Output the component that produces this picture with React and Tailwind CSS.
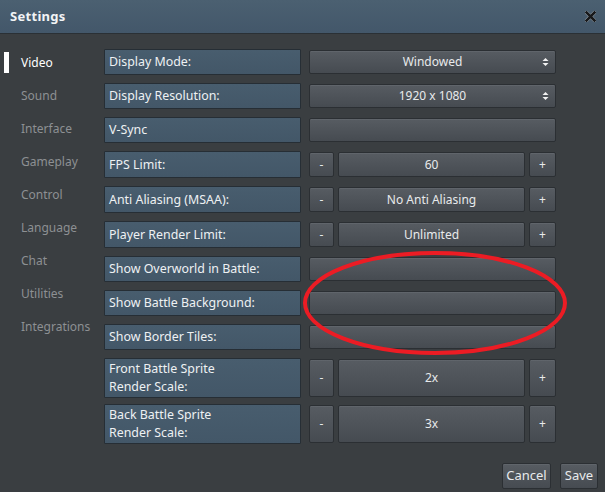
import React from 'react'

const menu = ['Video', 'Sound', 'Interface', 'Gameplay', 'Control', 'Language', 'Chat', 'Utilities', 'Integrations']

const rows = [
  { label: 'Display Mode:', kind: 'select', value: 'Windowed', h: 'h-[26px]' },
  { label: 'Display Resolution:', kind: 'select', value: '1920 x 1080', h: 'h-[26px]' },
  { label: 'V-Sync', kind: 'blank', h: 'h-[26px]' },
  { label: 'FPS Limit:', kind: 'step', value: '60', h: 'h-[27px]' },
  { label: 'Anti Aliasing (MSAA):', kind: 'step', value: 'No Anti Aliasing', h: 'h-[27px]' },
  { label: 'Player Render Limit:', kind: 'step', value: 'Unlimited', h: 'h-[27px]' },
  { label: 'Show Overworld in Battle:', kind: 'blank', h: 'h-[26px]' },
  { label: 'Show Battle Background:', kind: 'blank', h: 'h-[26px]' },
  { label: 'Show Border Tiles:', kind: 'blank', h: 'h-[26px]' },
  { label: ['Front Battle Sprite', 'Render Scale:'], kind: 'step', value: '2x', h: 'h-[40px]' },
  { label: ['Back Battle Sprite', 'Render Scale:'], kind: 'step', value: '3x', h: 'h-[40px]', last: true },
]

const btn = 'flex items-center justify-center rounded-[2px] border border-[#2b2f33] bg-gradient-to-b from-[#575c62] to-[#464b51] text-[#e8eaec] shadow-[inset_0_1px_0_rgba(255,255,255,0.06)]'

const Spinner = () => (
  <svg width="7" height="9" viewBox="0 0 7 9" className="absolute right-[6px] top-1/2 -translate-y-1/2">
    <path d="M0.5 3.5 L3.5 0.5 L6.5 3.5 Z" fill="#f2f2f2" />
    <path d="M0.5 5.5 L3.5 8.5 L6.5 5.5 Z" fill="#f2f2f2" />
  </svg>
)

const Control = ({ row }) => {
  if (row.kind === 'select') {
    return (
      <div className={`${btn} relative h-full w-full`}>
        {row.value}
        <Spinner />
      </div>
    )
  }
  if (row.kind === 'step') {
    return (
      <div className="flex h-full w-full gap-[4px]">
        <div className={`${btn} w-[25px]`}>-</div>
        <div className={`${btn} flex-1`}>{row.value}</div>
        <div className={`${btn} w-[27px]`}>+</div>
      </div>
    )
  }
  return <div className={`${btn} h-full w-full`} />
}

export default function App() {
  return (
    <div
      className="relative flex h-[492px] w-[605px] flex-col overflow-hidden bg-[#3a3e41] text-[12px] text-[#e8eaec]"
      style={{ fontFamily: '"Noto Sans", "Open Sans", sans-serif' }}
    >
      {/* title bar */}
      <div className="flex h-[34px] shrink-0 items-center justify-between border-b border-[#2a3035] bg-gradient-to-b from-[#4b6071] to-[#43576a] pl-[10px] pr-[9px]">
        <span className="text-[13px] font-bold tracking-[0.3px] text-[#f2f4f6]">Settings</span>
        <svg width="11" height="11" viewBox="0 0 11 11">
          <path d="M1.5 1.5 L9.5 9.5 M9.5 1.5 L1.5 9.5" stroke="#9aa4ac" strokeWidth="3.4" strokeLinecap="square" />
          <path d="M1.5 1.5 L9.5 9.5 M9.5 1.5 L1.5 9.5" stroke="#18191b" strokeWidth="2.6" strokeLinecap="square" />
        </svg>
      </div>

      <div className="flex flex-1">
        {/* sidebar */}
        <div className="w-[104px] shrink-0 pt-[12px]">
          {menu.map((m, i) => (
            <div key={m} className="flex h-[33px] items-center">
              <div className={`ml-[4px] h-[21px] w-[5px] ${i === 0 ? 'bg-white' : ''}`} />
              <span className={`ml-[12px] ${i === 0 ? 'text-white' : 'text-[#8d9093]'}`}>{m}</span>
            </div>
          ))}
        </div>

        {/* settings list */}
        <div className="flex flex-1 flex-col">
          <div className="flex w-[452px] flex-col gap-[8px] pt-[15px]">
            {rows.map((row, i) => (
              <div key={i} className={`flex gap-[8px] ${row.h} ${row.last ? '-mt-[2px]' : ''}`}>
                <div className="flex w-[197px] shrink-0 flex-col justify-center rounded-[1px] border border-[#262e35] bg-gradient-to-b from-[#485d6e] to-[#435768] pl-[4px] text-[12.4px] leading-[18px] text-[#eef1f3]">
                  {Array.isArray(row.label) ? row.label.map(l => <span key={l}>{l}</span>) : row.label}
                </div>
                <div className="flex w-[247px] py-[1px]">
                  <Control row={row} />
                </div>
              </div>
            ))}
          </div>

          <div className="mt-auto flex justify-end gap-[9px] pb-[3px] pr-[7px]">
            <div className={`${btn} h-[26px] w-[49px] text-[13px]`}>Cancel</div>
            <div className={`${btn} h-[26px] w-[38px] text-[13px]`}>Save</div>
          </div>
        </div>
      </div>

      {/* red annotation */}
      <svg className="pointer-events-none absolute left-0 top-0" width="605" height="492">
        <ellipse cx="435" cy="303" rx="130" ry="50" fill="none" stroke="#ec1c24" strokeWidth="4" />
      </svg>
    </div>
  )
}
